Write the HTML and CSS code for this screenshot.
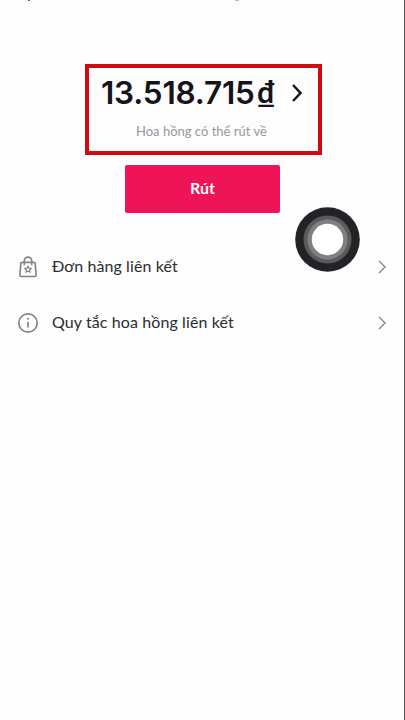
FILE: index.html
```
<!DOCTYPE html>
<html lang="vi">
<head>
<meta charset="utf-8">
<title>Hoa hồng</title>
<link rel="stylesheet" href="styles.css">
</head>
<body>
<main class="screen">
  <span class="speck speck-left"></span>
  <span class="speck speck-right"></span>
  <section class="balance">
    <div class="amount-row">
      <span class="amount">13.518.715</span><span class="currency">₫</span>
      <svg class="amount-arrow" viewBox="0 0 12 20"><path d="M2 2 9.5 10 2 18"/></svg>
    </div>
    <p class="caption">Hoa hồng có thể rút về</p>
  </section>
  <button class="withdraw">Rút</button>
  <nav class="menu">
    <a class="row">
      <svg class="icon" viewBox="0 0 22 22">
        <path d="M5 6.3h12a1.2 1.2 0 0 1 1.2 1.1l.9 11.5a1.5 1.5 0 0 1-1.5 1.6H4.4a1.5 1.5 0 0 1-1.5-1.6L3.8 7.4A1.2 1.2 0 0 1 5 6.3Z"/>
        <path d="M7.3 9.3V4.8a3.7 3.7 0 0 1 7.4 0v4.5"/>
        <path class="thin" d="m11 10.2 1 1.9 2.1.4-1.5 1.5.3 2.1-1.9-.9-1.9.9.3-2.1-1.5-1.5 2.1-.4Z"/>
      </svg>
      <span class="label">Đơn hàng liên kết</span>
      <svg class="chevron" viewBox="0 0 8 14"><path d="M1 1 7 7 1 13"/></svg>
    </a>
    <a class="row">
      <svg class="icon" viewBox="0 0 22 22">
        <circle cx="11" cy="11" r="9.2"/>
        <path d="M11 9.8v5.7"/><path class="dot" d="M11 6.7v.1"/>
      </svg>
      <span class="label">Quy tắc hoa hồng liên kết</span>
      <svg class="chevron" viewBox="0 0 8 14"><path d="M1 1 7 7 1 13"/></svg>
    </a>
  </nav>
  <svg class="touch" viewBox="0 0 65 65">
    <circle class="ring-outer" cx="32.5" cy="32.5" r="32.3"/>
    <circle class="ring-dark" cx="32.5" cy="32.5" r="24"/>
    <circle class="ring-mid" cx="32.5" cy="32.5" r="20"/>
    <circle class="ring-core" cx="32.5" cy="32.5" r="15.7"/>
  </svg>
</main>
</body>
</html>
```
FILE: styles.css
```
* { box-sizing: border-box; }
body {
  margin: 0;
  background: #fdfdfd;
  font-family: Lato, "Noto Sans", sans-serif;
}
.screen {
  position: relative;
  height: 720px;
  padding-top: 64px;
  border-right: 1px solid #555;
  overflow: hidden;
}
.speck { position: absolute; top: 0; height: 1px; }
.speck-left { left: 28px; width: 2px; background: #666; }
.speck-right { left: 235px; width: 4px; background: #bbb; }
.balance {
  width: 237px;
  height: 91px;
  margin-left: 85px;
  padding: 7px 0 0 12px;
  border: 4px solid #cf0a14;
}
.amount-row {
  display: flex;
  align-items: center;
  height: 34px;
  color: #151519;
}
.amount {
  width: 156px;
  padding-top: 1px;
  font-family: Inter, sans-serif;
  font-size: 31.5px;
  font-weight: 600;
  line-height: 34px;
  letter-spacing: -0.2px;
  white-space: nowrap;
}
.currency {
  width: 19px;
  padding-bottom: 3px;
  font-size: 30px;
  font-weight: 700;
  line-height: 34px;
}
.amount-arrow {
  width: 12px;
  height: 20px;
  margin: 2px 0 0 15px;
  fill: none;
  stroke: #151519;
  stroke-width: 2.5;
}
.caption {
  margin: 13px 0 0 35px;
  color: #98989b;
  font-size: 13px;
  line-height: 18px;
  white-space: nowrap;
}
.withdraw {
  display: block;
  width: 155px;
  height: 48px;
  margin: 10px 0 0 125px;
  padding: 0 0 2px;
  border: 0;
  border-radius: 2px;
  background: #ee1457;
  color: #fff;
  font: 700 16px/20px Lato, "Noto Sans", sans-serif;
}
.menu { padding: 26px 18px 0 17px; }
.row { display: flex; align-items: center; height: 56px; }
.icon {
  width: 22px;
  height: 22px;
  fill: none;
  stroke: #858589;
  stroke-width: 1.7;
}
.thin { stroke-width: 1.2; }
.dot { stroke-width: 2; stroke-linecap: round; }
.label {
  flex: 1;
  margin: 0 0 2px 13px;
  color: #2c2c30;
  font-size: 16px;
  line-height: 22px;
  letter-spacing: 0.1px;
  white-space: nowrap;
}
.chevron {
  width: 8px;
  height: 14px;
  fill: none;
  stroke: #88888b;
  stroke-width: 1.4;
}
.touch {
  position: absolute;
  left: 295px;
  top: 207px;
  width: 65px;
  height: 65px;
}
.ring-outer { fill: #242226; }
.ring-dark { fill: #5c5a5d; }
.ring-mid { fill: #817f82; }
.ring-core { fill: #fff; }
```
